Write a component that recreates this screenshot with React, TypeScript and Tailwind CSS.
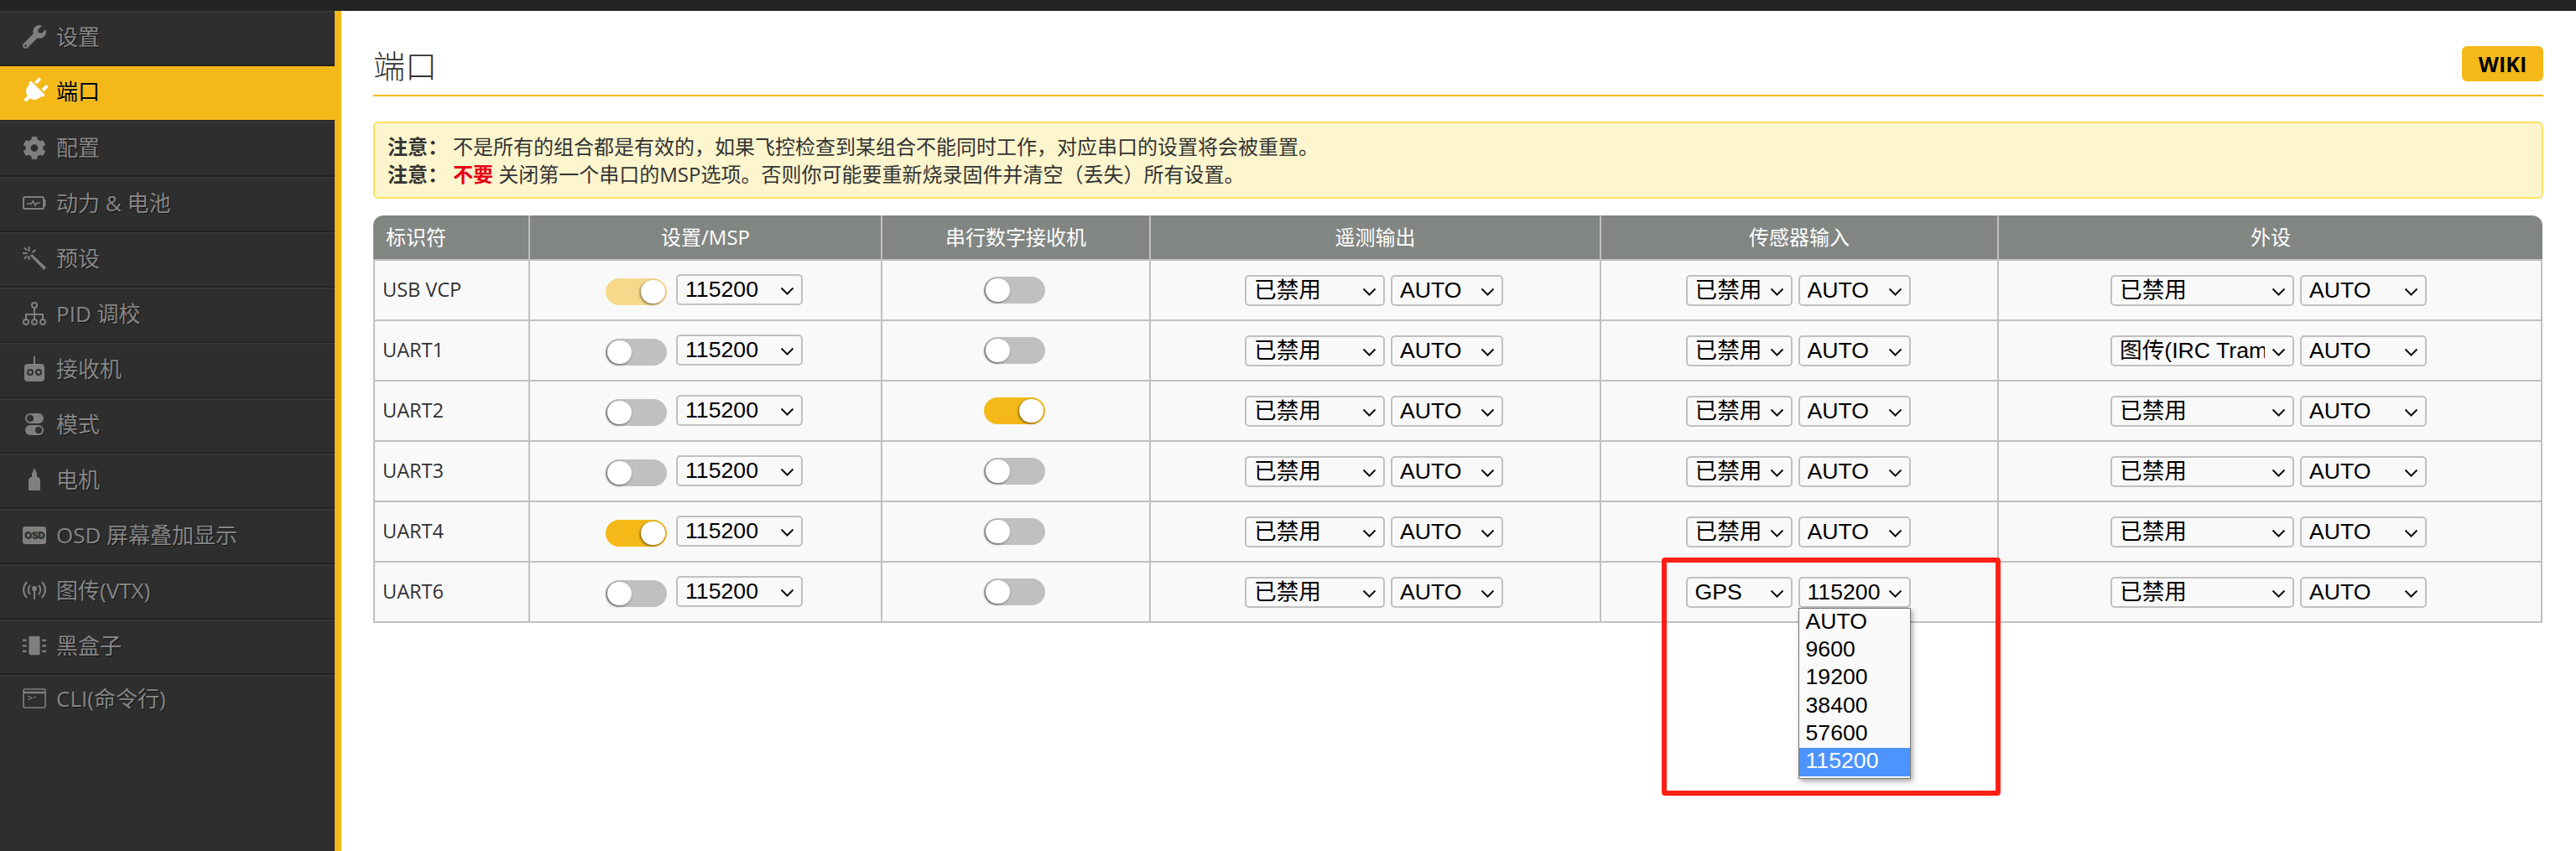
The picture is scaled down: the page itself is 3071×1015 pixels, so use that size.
import React from "react";
import { FaWrench, FaPlug, FaCog } from "react-icons/fa";

const sel = "font-['Liberation_Sans','Noto_Sans_CJK_SC',sans-serif]";

const Chevron = () => (
  <svg viewBox="0 0 17 10" className="pointer-events-none absolute top-[15px] right-[10px] h-[10px] w-[17px]">
    <polyline points="1.5,1.5 8.5,8.5 15.5,1.5" fill="none" stroke="#111" strokeWidth="2" />
  </svg>
);

const Select = ({ value, width, options }: { value: string; width: number; options?: string[] }) => (
  <span className="relative inline-block align-middle" style={{ width }}>
    <select
      defaultValue={value}
      className={`${sel} h-[37px] w-full appearance-none rounded-[5px] border-2 border-[#c0c0c0] bg-[#f9f9f9] pl-[9px] pr-[33px] text-[26.67px] leading-[33px] text-black outline-none`}
    >
      {(options ?? [value]).map((o) => (
        <option key={o}>{o}</option>
      ))}
    </select>
    <Chevron />
  </span>
);

const Switch = ({ state, shift }: { state: "off" | "on" | "faded"; shift?: boolean }) => {
  const bg = state === "off" ? "bg-[#c0c0c0] justify-start" : state === "on" ? "bg-[#f4b919] justify-end" : "bg-[#f7d98b] justify-end";
  return (
    <span className={`inline-flex h-[32px] w-[73px] items-center rounded-full p-[2px] align-middle ${bg} ${shift ? "translate-y-[3px]" : ""}`}>
      <span className="h-[28px] w-[29px] rounded-full bg-white shadow-[-1px_1px_3px_rgba(0,0,0,0.55)]" />
    </span>
  );
};

const WandIcon = () => (
  <svg viewBox="0 0 28 28" className="h-[28px] w-[28px]" fill="#7f7f7f">
    <polygon points="9,11 11,9 28,25 25.5,28" />
    <rect x="6.5" y="0" width="2" height="6" />
    <rect x="6.5" y="11" width="2" height="5" />
    <rect x="0" y="7" width="5.5" height="2" />
    <rect x="11" y="5" width="5" height="2" transform="rotate(-40 13 6)" />
    <rect x="1" y="1.5" width="5" height="2" transform="rotate(45 3 2.5)" />
    <rect x="1" y="12.5" width="5" height="2" transform="rotate(-45 3 13.5)" />
  </svg>
);

const BatteryIcon = () => (
  <svg viewBox="0 0 28 16" className="h-[16px] w-[28px]" fill="none" stroke="#7f7f7f">
    <rect x="1" y="1" width="24" height="14" rx="1.5" strokeWidth="2" />
    <rect x="25.5" y="4" width="2" height="8" fill="#7f7f7f" stroke="none" />
    <polyline points="5,9 10.5,9 12.5,5.5 15,11 17,8 21,8" strokeWidth="1.6" />
  </svg>
);

const TreeIcon = () => (
  <svg viewBox="0 0 28 28" className="h-[28px] w-[28px]" fill="none" stroke="#7f7f7f" strokeWidth="2">
    <circle cx="14" cy="4" r="3" />
    <circle cx="4" cy="24" r="3" />
    <circle cx="14" cy="24" r="3" />
    <circle cx="24" cy="24" r="3" />
    <path d="M14 7v14M4 21v-6h20v6" />
  </svg>
);

const ReceiverIcon = () => (
  <svg viewBox="0 0 28 30" className="h-[30px] w-[28px]">
    <rect x="13" y="0" width="2" height="10" fill="#7f7f7f" />
    <rect x="2" y="9" width="24" height="21" rx="4" fill="#7f7f7f" />
    <circle cx="9" cy="19" r="3" fill="none" stroke="#2e2e2e" strokeWidth="2" />
    <circle cx="19" cy="19" r="3" fill="none" stroke="#2e2e2e" strokeWidth="2" />
  </svg>
);

const ModesIcon = () => (
  <svg viewBox="0 0 28 28" className="h-[28px] w-[28px]">
    <rect x="3" y="1" width="22" height="12" rx="6" fill="#7f7f7f" />
    <circle cx="9" cy="7" r="4" fill="#2e2e2e" />
    <rect x="3" y="15" width="22" height="12" rx="6" fill="#7f7f7f" />
    <circle cx="19" cy="21" r="4" fill="#2e2e2e" />
  </svg>
);

const MotorIcon = () => (
  <svg viewBox="0 0 28 28" className="h-[28px] w-[28px]" fill="#7f7f7f">
    <path d="M14 0l3 7v5h-6V7z" />
    <path d="M8 13c0-2 2-2 6-2s6 0 6 2l1 1v12c0 1-1 1-1 1H8s-1 0-1-1V14z" />
  </svg>
);

const OsdIcon = () => (
  <span className="flex h-[21px] w-[28px] items-center justify-center rounded-[3px] bg-[#7f7f7f] font-['Liberation_Sans',sans-serif] text-[11px] leading-none font-bold text-[#2e2e2e]">
    OSD
  </span>
);

const VtxIcon = () => (
  <svg viewBox="0 0 28 24" className="h-[24px] w-[28px]" fill="none" stroke="#7f7f7f" strokeWidth="2">
    <path d="M5 2C0 8 0 15 5 21M23 2c5 6 5 13 0 19M9 6c-3 3-3 8 0 11M19 6c3 3 3 8 0 11" />
    <circle cx="14" cy="10" r="2" fill="#7f7f7f" />
    <path d="M14 12v11" />
  </svg>
);

const ChipIcon = () => (
  <svg viewBox="0 0 30 24" className="h-[24px] w-[29px]" fill="#7f7f7f">
    <rect x="8" y="0" width="14" height="24" rx="1.5" />
    <rect x="0" y="4" width="5" height="2.5" />
    <rect x="0" y="11" width="5" height="2.5" />
    <rect x="0" y="18" width="5" height="2.5" />
    <rect x="25" y="4" width="5" height="2.5" />
    <rect x="25" y="11" width="5" height="2.5" />
    <rect x="25" y="18" width="5" height="2.5" />
  </svg>
);

const CliIcon = () => (
  <svg viewBox="0 0 28 24" className="h-[24px] w-[28px]" fill="none" stroke="#7f7f7f">
    <rect x="1" y="1" width="26" height="22" rx="1.5" strokeWidth="1.6" />
    <path d="M1 5h26" strokeWidth="2.5" />
    <path d="M6 9l5 2.5-5 2.5M13 10.5h3" strokeWidth="1.2" />
  </svg>
);

const navItems: { label: string; icon: React.ReactNode; active?: boolean }[] = [
  { label: "设置", icon: <FaWrench size={28} color="#7f7f7f" /> },
  { label: "端口", icon: <FaPlug size={32} color="#fff" className="rotate-45" />, active: true },
  { label: "配置", icon: <FaCog size={29} color="#7f7f7f" /> },
  { label: "动力 & 电池", icon: <BatteryIcon /> },
  { label: "预设", icon: <WandIcon /> },
  { label: "PID 调校", icon: <TreeIcon /> },
  { label: "接收机", icon: <ReceiverIcon /> },
  { label: "模式", icon: <ModesIcon /> },
  { label: "电机", icon: <MotorIcon /> },
  { label: "OSD 屏幕叠加显示", icon: <OsdIcon /> },
  { label: "图传(VTX)", icon: <VtxIcon /> },
  { label: "黑盒子", icon: <ChipIcon /> },
  { label: "CLI(命令行)", icon: <CliIcon /> },
];

type Port = {
  name: string;
  msp: "off" | "on" | "faded";
  rx: "off" | "on";
  sensor?: string;
  sensorBaud?: string;
  periph?: string;
};

const ports: Port[] = [
  { name: "USB VCP", msp: "faded", rx: "off" },
  { name: "UART1", msp: "off", rx: "off", periph: "图传(IRC Tramp)" },
  { name: "UART2", msp: "off", rx: "on" },
  { name: "UART3", msp: "off", rx: "off" },
  { name: "UART4", msp: "on", rx: "off" },
  { name: "UART6", msp: "off", rx: "off", sensor: "GPS", sensorBaud: "115200" },
];

const bauds = ["AUTO", "9600", "19200", "38400", "57600", "115200"];

const th = "h-[54px] border-r-2 border-b-2 border-[#c0c0c0] bg-[#828683] text-center text-[24px] font-normal text-white";
const td = "h-[72px] border-r-2 border-b-2 border-[#c0c0c0] bg-[#f9f9f9] pr-[3px] text-center whitespace-nowrap";

export default function App() {
  return (
    <div className="relative flex h-[1015px] w-[3071px] flex-col overflow-hidden bg-white font-['Open_Sans','Noto_Sans_CJK_SC',sans-serif]">
      <div className="h-[13px] shrink-0 bg-[#242424]" />
      <div className="flex min-h-0 flex-1">
        <nav className="w-[407px] shrink-0 border-r-[8px] border-[#f4b919] bg-[#2e2e2e]">
          {navItems.map((item) => (
            <div
              key={item.label}
              className={`flex h-[66px] items-center border-b-2 pb-[4px] pl-[27px] text-[26px] leading-none last:border-b-transparent last:pb-[10px] ${
                item.active
                  ? "border-[#2a2a2a] bg-[#f4b919] text-black [text-shadow:0_1px_0_rgba(255,255,255,0.35)]"
                  : "border-t-2 border-t-[#373737] border-b-[#232323] text-[#868686] [text-shadow:1px_1px_0_rgba(0,0,0,0.6)]"
              }`}
            >
              <span className="mr-[12px] flex w-[28px] items-center justify-center">{item.icon}</span>
              <span>{item.label}</span>
            </div>
          ))}
        </nav>

        <main className="min-w-0 flex-1 pt-[42px] pr-[39px] pl-[38px]">
          <div className="flex h-[60px] items-start justify-between border-b-2 border-[#f4b919]">
            <h1 className="text-[38px] leading-[46px] font-light text-[#333]">端口</h1>
            <button className="h-[42px] w-[97px] rounded-[6px] bg-[#f4b919] text-[25px] leading-none font-bold text-black">
              WIKI
            </button>
          </div>

          <div className="mt-[30px] rounded-[6px] border-2 border-[#fbe164] bg-[#fcf5cd] px-[15px] py-[10.5px] text-[24px] leading-[33.5px] text-[#333]">
            <p>
              <b className="mr-[6px] font-bold">注意：</b>不是所有的组合都是有效的，如果飞控检查到某组合不能同时工作，对应串口的设置将会被重置。
            </p>
            <p>
              <b className="mr-[6px] font-bold">注意：</b>
              <b className="font-bold text-[#e60018]">不要</b> 关闭第一个串口的MSP选项。否则你可能要重新烧录固件并清空（丢失）所有设置。
            </p>
          </div>

          <table className="mt-[20px] w-[2586px] table-fixed border-separate border-spacing-0">
            <colgroup>
              <col className="w-[187px]" />
              <col className="w-[420px]" />
              <col className="w-[320px]" />
              <col className="w-[537px]" />
              <col className="w-[474px]" />
              <col className="w-[648px]" />
            </colgroup>
            <thead>
              <tr>
                <th className={`${th} rounded-tl-[12px] pl-[15px] text-left`}>标识符</th>
                <th className={th}>设置/MSP</th>
                <th className={th}>串行数字接收机</th>
                <th className={th}>遥测输出</th>
                <th className={th}>传感器输入</th>
                <th className="h-[54px] rounded-tr-[12px] border-b-2 border-[#c0c0c0] bg-[#828683] text-center text-[24px] font-normal text-white">外设</th>
              </tr>
            </thead>
            <tbody>
              {ports.map((p) => (
                <tr key={p.name}>
                  <td className={`${td} border-l-2 pl-[9px] text-left text-[23.5px] text-[#333]`}>{p.name}</td>
                  <td className={td}>
                    <span className="inline-flex items-center gap-[11px]">
                      <Switch state={p.msp} shift />
                      <Select value="115200" width={151} />
                    </span>
                  </td>
                  <td className={td}>
                    <Switch state={p.rx} />
                  </td>
                  <td className={td}>
                    <span className="inline-flex items-center gap-[7px]">
                      <Select value="已禁用" width={167} />
                      <Select value="AUTO" width={134} />
                    </span>
                  </td>
                  <td className={td}>
                    <span className="inline-flex items-center gap-[7px]">
                      <Select value={p.sensor ?? "已禁用"} width={127} />
                      <span className="relative inline-block">
                        <Select value={p.sensorBaud ?? "AUTO"} width={134} />
                        {p.sensor && (
                          <ul
                            className={`${sel} absolute top-full left-0 z-10 w-[134px] border border-[#767676] bg-[#fafafa] pb-[2px] text-left text-[26.67px] text-black shadow-[2px_3px_6px_rgba(0,0,0,0.35)]`}
                          >
                            {bauds.map((b) => (
                              <li
                                key={b}
                                className={`h-[33.4px] pl-[8px] leading-[31px] ${b === "115200" ? "bg-[#4d94ff] text-white" : ""}`}
                              >
                                {b}
                              </li>
                            ))}
                          </ul>
                        )}
                      </span>
                    </span>
                  </td>
                  <td className={td}>
                    <span className="inline-flex items-center gap-[7px]">
                      <Select value={p.periph ?? "已禁用"} width={219} />
                      <Select value="AUTO" width={151} />
                    </span>
                  </td>
                </tr>
              ))}
            </tbody>
          </table>
        </main>
      </div>

      {/* annotation drawn over the screenshot */}
      <div className="pointer-events-none absolute top-[665px] left-[1981px] z-20 h-[284px] w-[404px] rounded-[4px] border-[6px] border-[#ff2015]" />
    </div>
  );
}
